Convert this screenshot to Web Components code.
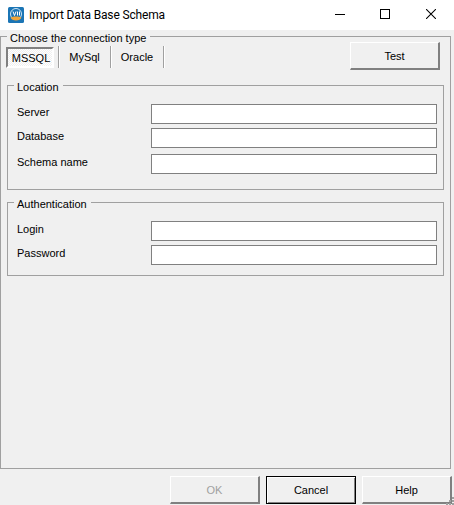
<!DOCTYPE html>
<html>
<head>
<meta charset="utf-8">
<title>Import Data Base Schema</title>
<style>
html, body { margin: 0; padding: 0; background: #f0f0f0; }
body { font: 11px "Liberation Sans", Arial, sans-serif; color: #000; width: 454px; height: 505px; overflow: hidden; }
.top-row { display: flex; justify-content: space-between; align-items: flex-start; margin-right: 4px; }
.outer { height: 433px; padding: 5px 6px 0 4px; }
.location { margin: 15px 0 0 2px; padding: 18px 6px 15px 9px; }
.auth { margin: 12px 0 0 2px; padding: 18px 6px 10px 9px; }
.gap4 { margin-top: 4px; }
.gap6 { margin-top: 6px; }
</style>
</head>
<body>
<import-dialog>
	<title-bar slot="title">Import Data Base Schema</title-bar>
	<group-box label="Choose the connection type" class="outer">
		<div class="top-row">
			<tab-strip>
				<tab-item active style="width:54px">MSSQL</tab-item>
				<tab-item style="width:52px">MySql</tab-item>
				<tab-item style="width:53px">Oracle</tab-item>
			</tab-strip>
			<win-button>Test</win-button>
		</div>
		<group-box label="Location" class="location">
			<form-field>Server</form-field>
			<form-field class="gap4">Database</form-field>
			<form-field class="gap6">Schema name</form-field>
		</group-box>
		<group-box label="Authentication" class="auth">
			<form-field>Login</form-field>
			<form-field class="gap4">Password</form-field>
		</group-box>
	</group-box>
	<win-button slot="actions" disabled>OK</win-button>
	<win-button slot="actions" default>Cancel</win-button>
	<win-button slot="actions">Help</win-button>
</import-dialog>

<script>
// Shared by every element that needs the dialog font
const fontCss = `font: 11px "Liberation Sans", Arial, sans-serif;`;

class TitleBar extends HTMLElement {
	constructor() {
		super();
		this.attachShadow({ mode: 'open' });
		this.shadowRoot.innerHTML = `
<style>
:host { display: flex; align-items: center; height: 30px; background: #fff; }
svg { display: block; flex: none; }
.icon { margin: 0 5px 0 8px; }
.text { flex: 1; font: 12px Roboto, "Noto Sans", sans-serif; letter-spacing: -0.15px; color: #000; white-space: nowrap; }
.ctl { width: 45px; height: 28px; padding-bottom: 2px; display: flex; align-items: center; justify-content: center; flex: none; }
.ctl svg { position: relative; left: -2px; }
.ctl.close svg { left: -1px; }
</style>
<svg class="icon" width="16" height="16" viewBox="0 0 16 16">
	<rect x="0" y="0" width="16" height="16" rx="1.500" fill="#1b75b5"/>
	<circle cx="8" cy="7" r="5.500" fill="none" stroke="#cfe4f3" stroke-width="1"/>
	<path d="M2.500 10.500c2.500-1.500 8.500-1.500 11 0c-1 4-10 4-11 0z" fill="#f2a63a"/>
	<path d="M5 4.500l1.500 4l1.500-4M9.500 4.500v4M11.500 4.500v4" fill="none" stroke="#fff" stroke-width="1"/>
</svg>
<span class="text"><slot></slot></span>
<span class="ctl"><svg width="10" height="10" viewBox="0 0 10 10"><path d="M0 5.500h10" stroke="#000" fill="none"/></svg></span>
<span class="ctl"><svg width="10" height="10" viewBox="0 0 10 10"><rect x="0.500" y="0.500" width="9" height="9" stroke="#000" fill="none"/></svg></span>
<span class="ctl close"><svg width="10" height="10" viewBox="0 0 10 10"><path d="M0 0l10 10M10 0L0 10" stroke="#000" stroke-width="1.050" fill="none"/></svg></span>`;
	}
}
window.customElements.define('title-bar', TitleBar);

class GroupBox extends HTMLElement {
	constructor() {
		super();
		this.attachShadow({ mode: 'open' });
		this.shadowRoot.innerHTML = `
<style>
:host { display: block; position: relative; box-sizing: border-box; border: 1px solid #a0a0a0; ${fontCss} }
.legend { position: absolute; left: 6px; top: -6px; padding: 0 4px 0 3px; background: #f0f0f0; line-height: 14px; white-space: nowrap; }
</style>
<span class="legend"></span>
<slot></slot>`;
	}

	static get observedAttributes() {
		return ['label'];
	}

	attributeChangedCallback(name, oldValue, newValue) {
		this.shadowRoot.querySelector('.legend').textContent = newValue;
	}
}
window.customElements.define('group-box', GroupBox);

class TabStrip extends HTMLElement {
	constructor() {
		super();
		this.attachShadow({ mode: 'open' });
		this.shadowRoot.innerHTML = `
<style>
:host { display: flex; align-items: stretch; height: 22px; margin-top: 4px; }
</style>
<slot></slot>`;
	}
}
window.customElements.define('tab-strip', TabStrip);

class TabItem extends HTMLElement {
	constructor() {
		super();
		this.attachShadow({ mode: 'open' });
		this.shadowRoot.innerHTML = `
<style>
:host { display: flex; box-sizing: border-box; align-items: center; justify-content: center; border-right: 1px solid #a0a0a0; box-shadow: 1px 0 0 #fff; padding-bottom: 1px; ${fontCss} }
:host([active]) { justify-content: flex-start; padding-bottom: 0; }
.pressed { display: flex; align-items: center; justify-content: center; }
:host([active]) .pressed { box-sizing: border-box; width: 48px; height: 21px; margin: 1px 0 0 1px; padding-left: 2px; border: 2px solid; border-color: #808080 #fff #fff #808080;
	background: repeating-conic-gradient(#fff 0 25%, #f0f0f0 0 50%) 0 0 / 2px 2px; }
</style>
<span class="pressed"><slot></slot></span>`;
	}
}
window.customElements.define('tab-item', TabItem);

class WinButton extends HTMLElement {
	constructor() {
		super();
		this.attachShadow({ mode: 'open' });
		this.shadowRoot.innerHTML = `
<style>
:host { display: flex; box-sizing: border-box; flex: none; width: 90px; height: 28px; align-items: center; justify-content: center; background: #f0f0f0; ${fontCss}
	border-style: solid; border-width: 1px 2px 2px 1px; border-color: #fff #808080 #808080 #fff; }
:host([disabled]) { color: #a0a0a0; }
:host([default]) { border: 1px solid #000; box-shadow: inset 1px 1px 0 #fff, inset -1px -1px 0 #808080; }
</style>
<slot></slot>`;
	}
}
window.customElements.define('win-button', WinButton);

class FormField extends HTMLElement {
	constructor() {
		super();
		this.attachShadow({ mode: 'open' });
		this.shadowRoot.innerHTML = `
<style>
:host { display: flex; align-items: flex-start; height: 20px; ${fontCss} }
.label { width: 134px; flex: none; line-height: 14px; margin-top: 1px; }
.box { box-sizing: border-box; width: 286px; height: 20px; background: #fff; border: 1px solid #808080; }
</style>
<span class="label"><slot></slot></span>
<div class="box"></div>`;
	}
}
window.customElements.define('form-field', FormField);

const dialogTemplate = document.createElement('template');
dialogTemplate.innerHTML = `
<style>
:host { display: flex; flex-direction: column; width: 454px; height: 505px; position: relative; ${fontCss} }
.main { box-sizing: border-box; flex: none; height: 439px; padding: 6px 3px 0 0; }
.bar { flex: 1; display: flex; justify-content: flex-end; gap: 6px; padding: 7px 2px 0 0; }
.grip { position: absolute; right: 0; bottom: 0; }
</style>
<slot name="title"></slot>
<div class="main"><slot></slot></div>
<div class="bar"><slot name="actions"></slot></div>
<svg class="grip" width="12" height="12" viewBox="0 0 12 12"><path d="M10 4h2v2h-2zM7 7h2v2H7zM10 7h2v2h-2zM4 10h2v2H4zM7 10h2v2H7zM10 10h2v2h-2z" fill="#a0a0a0"/></svg>`;

class ImportDialog extends HTMLElement {
	constructor() {
		super();
		this.attachShadow({ mode: 'open' });
		this.shadowRoot.appendChild(dialogTemplate.content.cloneNode(true));
	}
}
window.customElements.define('import-dialog', ImportDialog);
</script>
</body>
</html>
